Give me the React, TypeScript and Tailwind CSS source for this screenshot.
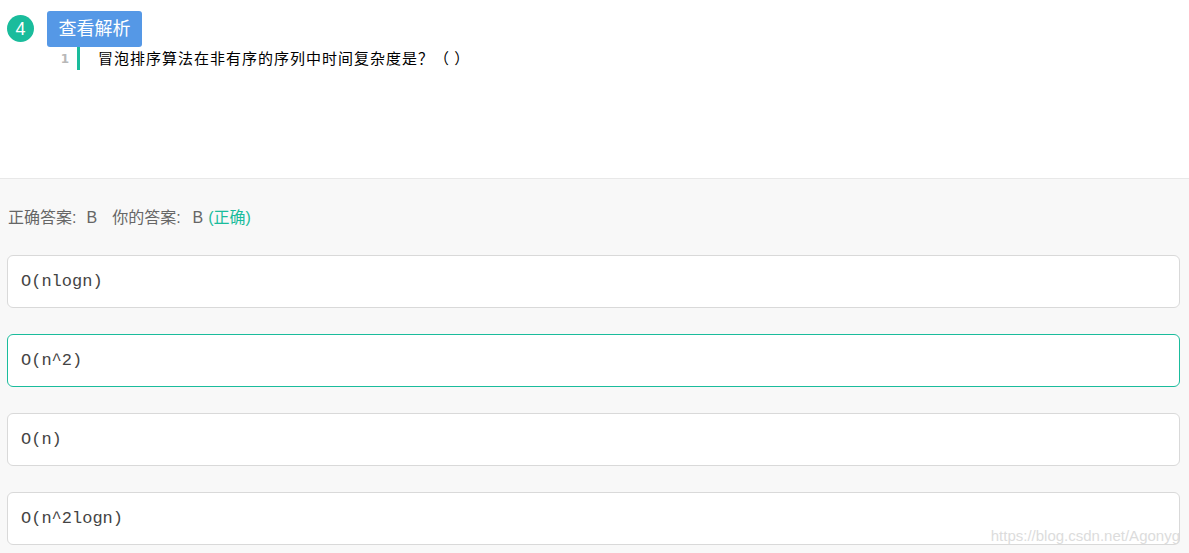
const options = [
  { label: "O(nlogn)", selected: false },
  { label: "O(n^2)", selected: true },
  { label: "O(n)", selected: false },
  { label: "O(n^2logn)", selected: false },
];

export default function App() {
  return (
    <div className="relative h-[553px] w-[1189px] overflow-hidden bg-[#f8f8f8] font-['Liberation_Sans','Noto_Sans_CJK_SC',sans-serif]">
      <section className="h-[179px] border-b border-[#e8e8e8] bg-white">
        <div className="flex items-start pl-[7px] pt-[11px]">
          <div className="mt-[4px] flex h-[27px] w-[27px] items-center justify-center rounded-full bg-[#1abc9c] text-[18px] leading-none text-white">
            4
          </div>
          <button className="ml-[13px] h-[36px] w-[95px] rounded-[3px] bg-[#5598e6] text-[18px] leading-none text-white">
            查看解析
          </button>
        </div>
        <div className="flex h-[23px] items-center">
          <span className="w-[70px] pr-[1px] text-right font-['DejaVu_Sans',sans-serif] text-[12px] font-bold text-[#b8b8b8]">
            1
          </span>
          <span className="ml-[7px] h-[23px] w-[3px] bg-[#1abc9c]" />
          <span className="ml-[18px] font-['Noto_Sans_CJK_SC',sans-serif] text-[15px] tracking-[1px] text-black">
            冒泡排序算法在非有序的序列中时间复杂度是？（ ）
          </span>
        </div>
      </section>

      <div className="px-[7px]">
        <div className="flex items-center pl-[1px] pt-[27px] text-[16px] leading-[24px] text-[#666]">
          <span>正确答案:</span>
          <span className="ml-[10px]">B</span>
          <span className="ml-[15px]">你的答案:</span>
          <span className="ml-[12px]">B</span>
          <span className="ml-[5px] text-[#1abc9c]">(正确)</span>
        </div>
        <div className="mt-[25px] flex flex-col gap-[26px]">
          {options.map((o) => (
            <div
              key={o.label}
              className={
                o.selected
                  ? "flex h-[53px] w-[1173px] items-center rounded-[6px] border border-[#1abc9c] bg-white px-[13px]"
                  : "flex h-[53px] w-[1173px] items-center rounded-[6px] border border-[#d9d9d9] bg-white px-[13px]"
              }
            >
              <span className="font-['Liberation_Mono',monospace] text-[17px] text-[#444]">{o.label}</span>
            </div>
          ))}
        </div>
      </div>

      <div className="absolute bottom-[6px] right-[9px] text-[15px] text-[#dcdcdc]">
        https://blog.csdn.net/Agonyg
      </div>
    </div>
  );
}
